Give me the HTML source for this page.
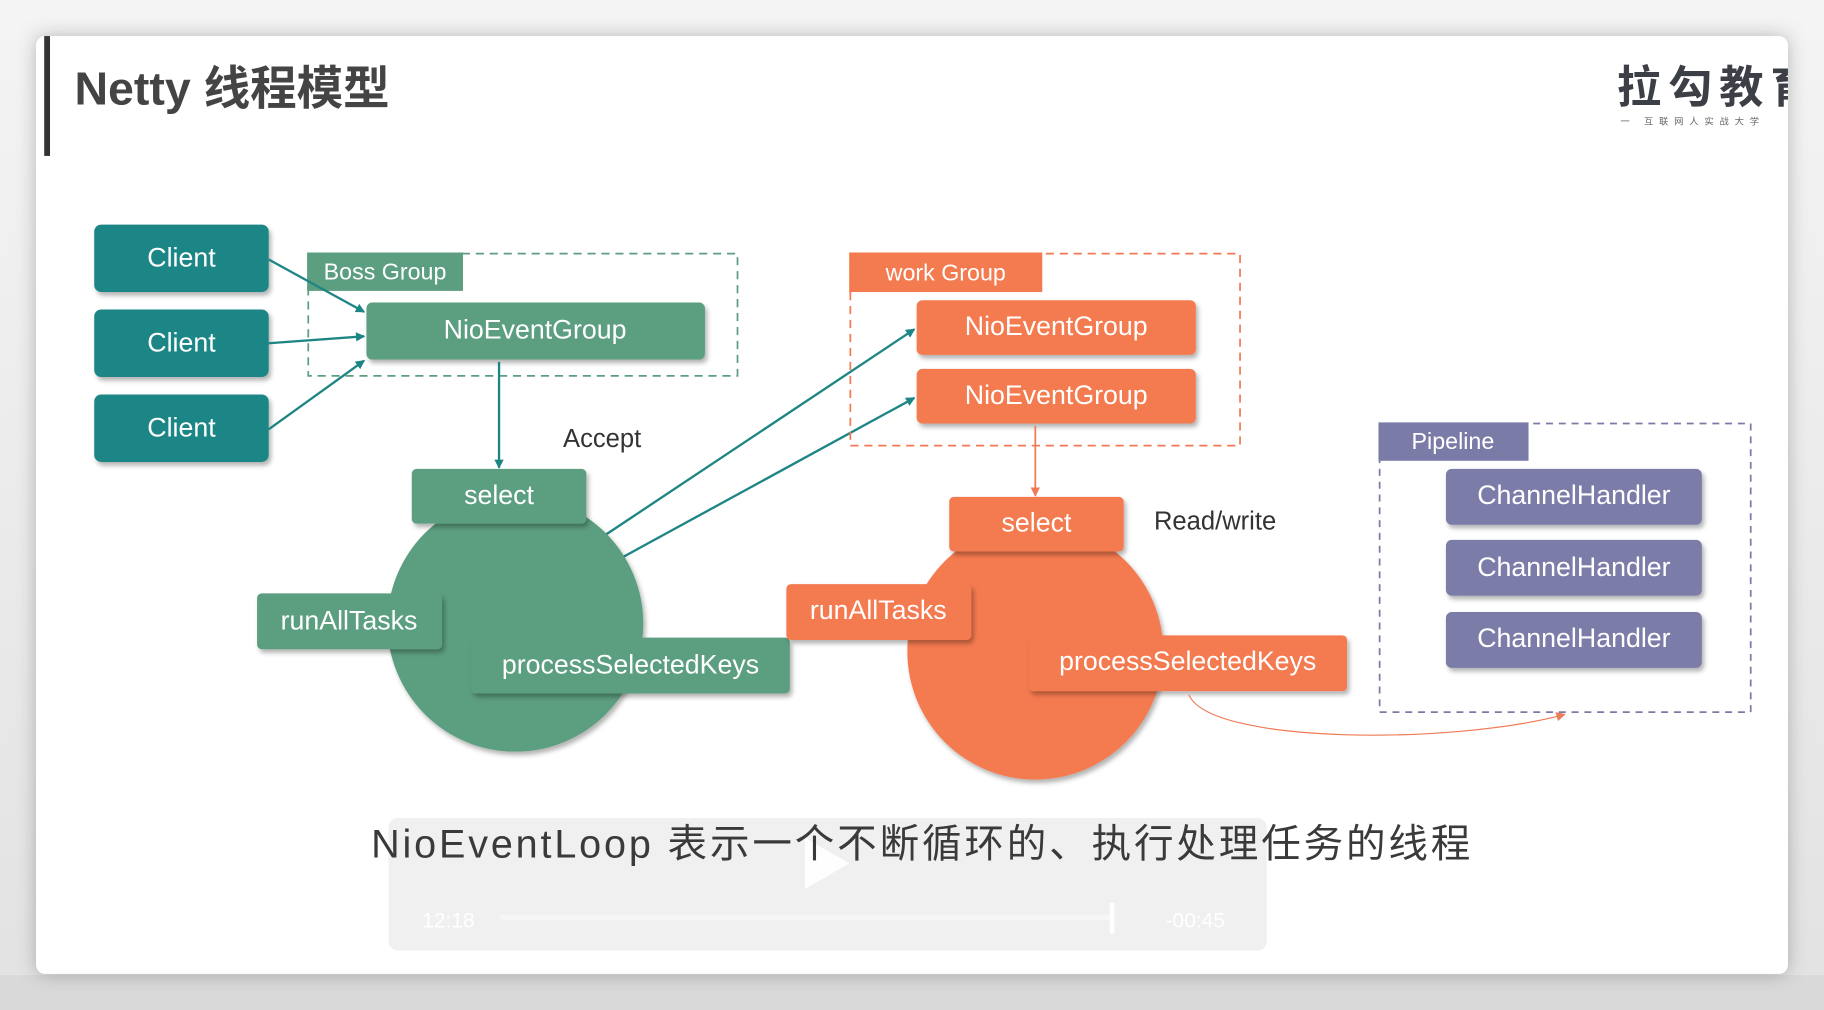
<!DOCTYPE html>
<html><head><meta charset="utf-8"><style>
html,body{margin:0;padding:0;width:1824px;height:1010px;overflow:hidden;background:#e9e9e9}
svg{display:block}
text{font-family:"Liberation Sans","Noto Sans CJK SC",sans-serif}
</style></head><body>
<svg width="1824" height="1010" viewBox="0 0 1568 868" preserveAspectRatio="none" xmlns="http://www.w3.org/2000/svg">
<defs>
<linearGradient id="bg" x1="0" y1="0" x2="0" y2="1"><stop offset="0" stop-color="#f4f4f4"/><stop offset="1" stop-color="#e2e2e2"/></linearGradient>
<filter id="sh" x="-10%" y="-10%" width="130%" height="140%"><feDropShadow dx="2" dy="3" stdDeviation="2" flood-color="#000" flood-opacity="0.3"/></filter>
<filter id="wsh" x="-5%" y="-5%" width="110%" height="110%"><feDropShadow dx="0" dy="0" stdDeviation="8" flood-color="#000" flood-opacity="0.25"/></filter>
<clipPath id="slide"><rect x="31" y="31" width="1506" height="806"/></clipPath>
<marker id="at" markerWidth="8" markerHeight="8" refX="7" refY="4" orient="auto" markerUnits="userSpaceOnUse"><path d="M0,0 L8,4 L0,8 z" fill="#1e8585"/></marker>
<marker id="ao" markerWidth="8" markerHeight="8" refX="7" refY="4" orient="auto" markerUnits="userSpaceOnUse"><path d="M0,0 L8,4 L0,8 z" fill="#f07a55"/></marker>
</defs>
<rect width="1568" height="868" fill="url(#bg)"/>
<rect x="0" y="838" width="1568" height="30" fill="#d9d9d9"/>
<rect x="31" y="31" width="1506" height="806" rx="8" fill="#fff" filter="url(#wsh)"/>
<rect x="38" y="31" width="5" height="103" fill="#333"/>
<text x="64" y="90" font-size="40" font-weight="bold" fill="#444">Netty 线程模型</text>
<g clip-path="url(#slide)">
<text x="1390" y="88" font-size="38" font-weight="bold" fill="#3d3f47" letter-spacing="6">拉勾教育</text>
</g>
<text x="1393" y="107" font-size="8" fill="#666" letter-spacing="5">一  互联网人实战大学</text>

<!-- Clients -->
<g filter="url(#sh)">
<rect x="81" y="193" width="150" height="58" rx="6" fill="#1e8585"/>
<rect x="81" y="266" width="150" height="58" rx="6" fill="#1e8585"/>
<rect x="81" y="339" width="150" height="58" rx="6" fill="#1e8585"/>
</g>
<g fill="#fff" font-size="23" text-anchor="middle">
<text x="156" y="229">Client</text><text x="156" y="302">Client</text><text x="156" y="375">Client</text>
</g>

<!-- Boss group -->
<rect x="265" y="218" width="369" height="105" fill="none" stroke="#5c9e80" stroke-width="1.5" stroke-dasharray="7,5"/>
<rect x="264" y="217" width="134" height="33" fill="#5c9e80"/>
<text x="331" y="240" font-size="20" fill="#fff" text-anchor="middle">Boss Group</text>
<rect x="315" y="260" width="291" height="49" rx="5" fill="#5c9e80" filter="url(#sh)"/>
<text x="460" y="291" font-size="23" fill="#fff" text-anchor="middle">NioEventGroup</text>
<g stroke="#1e8585" stroke-width="2" fill="none">
<line x1="231" y1="223" x2="313" y2="268" marker-end="url(#at)"/>
<line x1="231" y1="295" x2="313" y2="289" marker-end="url(#at)"/>
<line x1="231" y1="369" x2="313" y2="310" marker-end="url(#at)"/>
<line x1="429" y1="311" x2="429" y2="402" marker-end="url(#at)"/>
<line x1="520" y1="460" x2="786" y2="283" marker-end="url(#at)"/>
<line x1="535" y1="479" x2="786" y2="342" marker-end="url(#at)"/>
</g>
<text x="484" y="384" font-size="22" fill="#333">Accept</text>

<circle cx="443" cy="536" r="110" fill="#5c9e80" filter="url(#sh)"/>
<rect x="354" y="403" width="150" height="47" rx="4" fill="#5c9e80" filter="url(#sh)"/>
<text x="429" y="433" font-size="23" fill="#fff" text-anchor="middle">select</text>
<rect x="221" y="510" width="159" height="48" rx="4" fill="#5c9e80" filter="url(#sh)"/>
<text x="300" y="541" font-size="23" fill="#fff" text-anchor="middle">runAllTasks</text>
<rect x="405" y="548" width="274" height="48" rx="4" fill="#5c9e80" filter="url(#sh)"/>
<text x="542" y="579" font-size="23" fill="#fff" text-anchor="middle">processSelectedKeys</text>

<!-- Work group -->
<rect x="731" y="218" width="335" height="165" fill="none" stroke="#f07a55" stroke-width="1.5" stroke-dasharray="7,5"/>
<rect x="730" y="217" width="166" height="34" fill="#f47a50"/>
<text x="813" y="241" font-size="20" fill="#fff" text-anchor="middle">work Group</text>
<rect x="788" y="258" width="240" height="47" rx="5" fill="#f47a50" filter="url(#sh)"/>
<text x="908" y="288" font-size="23" fill="#fff" text-anchor="middle">NioEventGroup</text>
<rect x="788" y="317" width="240" height="47" rx="5" fill="#f47a50" filter="url(#sh)"/>
<text x="908" y="347" font-size="23" fill="#fff" text-anchor="middle">NioEventGroup</text>
<line x1="890" y1="366" x2="890" y2="426" stroke="#f07a55" stroke-width="1.5" marker-end="url(#ao)"/>
<text x="992" y="455" font-size="22" fill="#333">Read/write</text>

<circle cx="890" cy="560" r="110" fill="#f47a50" filter="url(#sh)"/>
<rect x="816" y="427" width="150" height="47" rx="4" fill="#f47a50" filter="url(#sh)"/>
<text x="891" y="457" font-size="23" fill="#fff" text-anchor="middle">select</text>
<rect x="676" y="502" width="159" height="48" rx="4" fill="#f47a50" filter="url(#sh)"/>
<text x="755" y="532" font-size="23" fill="#fff" text-anchor="middle">runAllTasks</text>
<rect x="884" y="546" width="274" height="48" rx="4" fill="#f47a50" filter="url(#sh)"/>
<text x="1021" y="576" font-size="23" fill="#fff" text-anchor="middle">processSelectedKeys</text>
<path d="M1022,597 C1040,640 1250,640 1345,614" fill="none" stroke="#f07a55" stroke-width="1" marker-end="url(#ao)"/>

<!-- Pipeline -->
<rect x="1186" y="364" width="319" height="248" fill="none" stroke="#7b7ba8" stroke-width="1.5" stroke-dasharray="6,5"/>
<rect x="1185" y="363" width="129" height="33" fill="#7b7ba8"/>
<text x="1249" y="386" font-size="20" fill="#fff" text-anchor="middle">Pipeline</text>
<g filter="url(#sh)" fill="#7b7ba8">
<rect x="1243" y="403" width="220" height="48" rx="5"/>
<rect x="1243" y="464" width="220" height="48" rx="5"/>
<rect x="1243" y="526" width="220" height="48" rx="5"/>
</g>
<g fill="#fff" font-size="23" text-anchor="middle">
<text x="1353" y="433">ChannelHandler</text><text x="1353" y="495">ChannelHandler</text><text x="1353" y="556">ChannelHandler</text>
</g>

<!-- player overlay -->
<rect x="334" y="703" width="755" height="114" rx="8" fill="#eee" opacity="0.9"/>
<text x="363" y="797" font-size="18" fill="#fff">12:18</text>
<rect x="430" y="786" width="525" height="5" rx="2" fill="#f6f6f6"/>
<rect x="954" y="776" width="4" height="26" fill="#fff"/>
<text x="1002" y="797" font-size="18" fill="#fff">-00:45</text>
<path d="M692,720 L730,742 L692,764 z" fill="#fff" opacity="0.9"/>
<text x="319" y="737" font-size="34" fill="#3a3a3a" textLength="945">NioEventLoop 表示一个不断循环的、执行处理任务的线程</text>
</svg>
</body></html>
